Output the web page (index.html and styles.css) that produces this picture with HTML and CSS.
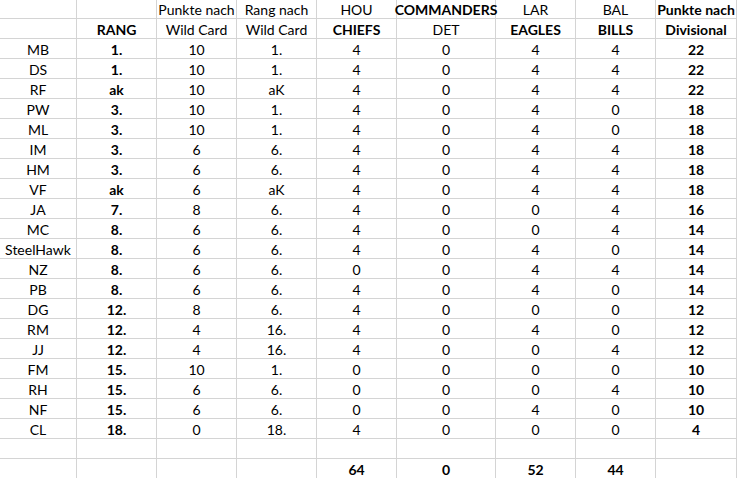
FILE: index.html
```html
<!DOCTYPE html>
<html lang="de">
<head>
<meta charset="utf-8">
<title>Tabelle</title>
<link rel="stylesheet" href="styles.css">
</head>
<body>
<div class="sheet">
  <div class="c"></div><div class="c"></div><div class="c">Punkte nach</div><div class="c">Rang nach</div><div class="c">HOU</div><div class="c b over">COMMANDERS</div><div class="c">LAR</div><div class="c">BAL</div><div class="c b">Punkte nach</div>
  <div class="c"></div><div class="c b">RANG</div><div class="c">Wild Card</div><div class="c">Wild Card</div><div class="c b">CHIEFS</div><div class="c">DET</div><div class="c b">EAGLES</div><div class="c b">BILLS</div><div class="c b">Divisional</div>
  <div class="c">MB</div><div class="c b">1.</div><div class="c">10</div><div class="c">1.</div><div class="c">4</div><div class="c">0</div><div class="c">4</div><div class="c">4</div><div class="c b">22</div>
  <div class="c">DS</div><div class="c b">1.</div><div class="c">10</div><div class="c">1.</div><div class="c">4</div><div class="c">0</div><div class="c">4</div><div class="c">4</div><div class="c b">22</div>
  <div class="c">RF</div><div class="c b">ak</div><div class="c">10</div><div class="c">aK</div><div class="c">4</div><div class="c">0</div><div class="c">4</div><div class="c">4</div><div class="c b">22</div>
  <div class="c">PW</div><div class="c b">3.</div><div class="c">10</div><div class="c">1.</div><div class="c">4</div><div class="c">0</div><div class="c">4</div><div class="c">0</div><div class="c b">18</div>
  <div class="c">ML</div><div class="c b">3.</div><div class="c">10</div><div class="c">1.</div><div class="c">4</div><div class="c">0</div><div class="c">4</div><div class="c">0</div><div class="c b">18</div>
  <div class="c">IM</div><div class="c b">3.</div><div class="c">6</div><div class="c">6.</div><div class="c">4</div><div class="c">0</div><div class="c">4</div><div class="c">4</div><div class="c b">18</div>
  <div class="c">HM</div><div class="c b">3.</div><div class="c">6</div><div class="c">6.</div><div class="c">4</div><div class="c">0</div><div class="c">4</div><div class="c">4</div><div class="c b">18</div>
  <div class="c">VF</div><div class="c b">ak</div><div class="c">6</div><div class="c">aK</div><div class="c">4</div><div class="c">0</div><div class="c">4</div><div class="c">4</div><div class="c b">18</div>
  <div class="c">JA</div><div class="c b">7.</div><div class="c">8</div><div class="c">6.</div><div class="c">4</div><div class="c">0</div><div class="c">0</div><div class="c">4</div><div class="c b">16</div>
  <div class="c">MC</div><div class="c b">8.</div><div class="c">6</div><div class="c">6.</div><div class="c">4</div><div class="c">0</div><div class="c">0</div><div class="c">4</div><div class="c b">14</div>
  <div class="c">SteelHawk</div><div class="c b">8.</div><div class="c">6</div><div class="c">6.</div><div class="c">4</div><div class="c">0</div><div class="c">4</div><div class="c">0</div><div class="c b">14</div>
  <div class="c">NZ</div><div class="c b">8.</div><div class="c">6</div><div class="c">6.</div><div class="c">0</div><div class="c">0</div><div class="c">4</div><div class="c">4</div><div class="c b">14</div>
  <div class="c">PB</div><div class="c b">8.</div><div class="c">6</div><div class="c">6.</div><div class="c">4</div><div class="c">0</div><div class="c">4</div><div class="c">0</div><div class="c b">14</div>
  <div class="c">DG</div><div class="c b">12.</div><div class="c">8</div><div class="c">6.</div><div class="c">4</div><div class="c">0</div><div class="c">0</div><div class="c">0</div><div class="c b">12</div>
  <div class="c">RM</div><div class="c b">12.</div><div class="c">4</div><div class="c">16.</div><div class="c">4</div><div class="c">0</div><div class="c">4</div><div class="c">0</div><div class="c b">12</div>
  <div class="c">JJ</div><div class="c b">12.</div><div class="c">4</div><div class="c">16.</div><div class="c">4</div><div class="c">0</div><div class="c">0</div><div class="c">4</div><div class="c b">12</div>
  <div class="c">FM</div><div class="c b">15.</div><div class="c">10</div><div class="c">1.</div><div class="c">0</div><div class="c">0</div><div class="c">0</div><div class="c">0</div><div class="c b">10</div>
  <div class="c">RH</div><div class="c b">15.</div><div class="c">6</div><div class="c">6.</div><div class="c">0</div><div class="c">0</div><div class="c">0</div><div class="c">4</div><div class="c b">10</div>
  <div class="c">NF</div><div class="c b">15.</div><div class="c">6</div><div class="c">6.</div><div class="c">0</div><div class="c">0</div><div class="c">4</div><div class="c">0</div><div class="c b">10</div>
  <div class="c">CL</div><div class="c b">18.</div><div class="c">0</div><div class="c">18.</div><div class="c">4</div><div class="c">0</div><div class="c">0</div><div class="c">0</div><div class="c b">4</div>
  <div class="c"></div><div class="c"></div><div class="c"></div><div class="c"></div><div class="c"></div><div class="c"></div><div class="c"></div><div class="c"></div><div class="c"></div>
  <div class="c"></div><div class="c"></div><div class="c"></div><div class="c"></div><div class="c b">64</div><div class="c b">0</div><div class="c b">52</div><div class="c b">44</div><div class="c"></div>
</div>
</body>
</html>
```
FILE: styles.css
```css
html, body {
  margin: 0;
  padding: 0;
  background: #ffffff;
}
body {
  width: 737px;
  height: 478px;
  overflow: hidden;
}
.sheet {
  display: grid;
  grid-template-columns: 77px 80px 80px 80px 80px 99px 80px 80px 81px;
  grid-template-rows: 19px repeat(23, 20px);
  font-family: Lato, "Open Sans", sans-serif;
  font-size: 14px;
  color: #000000;
}
.c {
  box-sizing: border-box;
  border-right: 1px solid #d4d4d4;
  border-bottom: 1px solid #d4d4d4;
  display: flex;
  align-items: flex-end;
  justify-content: center;
  line-height: 15px;
  padding-bottom: 1px;
  white-space: nowrap;
  overflow: visible;
}
.b {
  font-weight: 700;
}
.over {
  position: relative;
  z-index: 1;
}
```
